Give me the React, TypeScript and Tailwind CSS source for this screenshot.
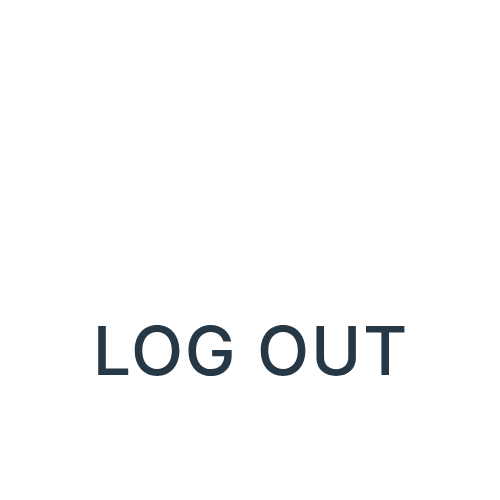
export default function App() {
  return (
    <div className="flex h-[500px] w-[500px] flex-col items-center bg-white pt-[316px]">
      <button
        type="button"
        className="pl-[0.025em] font-['Inter',sans-serif] text-[68px] font-[550] leading-none tracking-[0.025em] text-[#263746]"
      >
        LOG OUT
      </button>
    </div>
  );
}
